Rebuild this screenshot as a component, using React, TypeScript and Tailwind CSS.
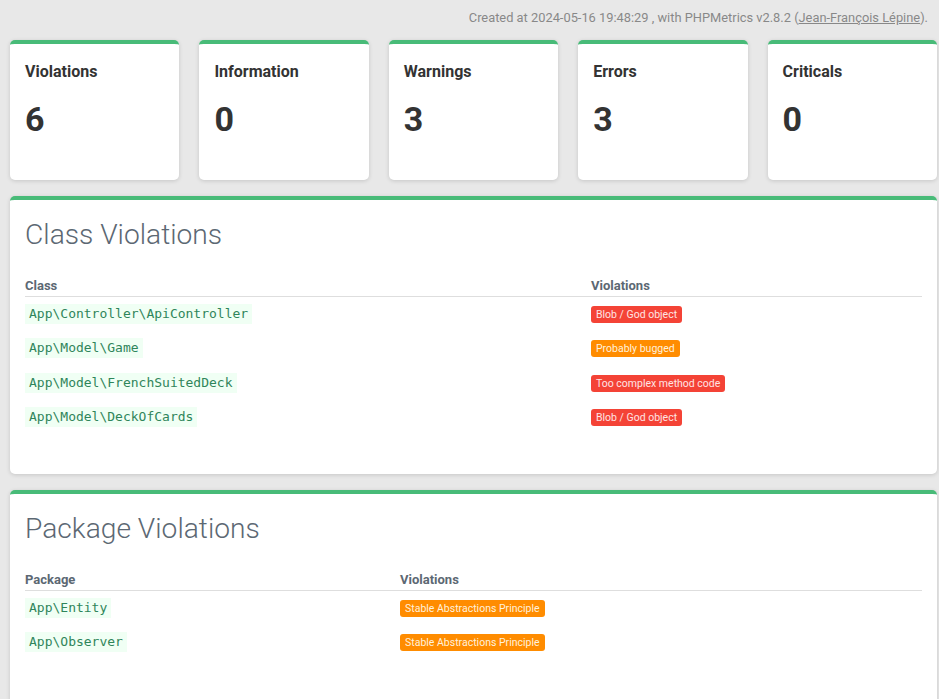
const stats = [
  { label: 'Violations', value: 6 },
  { label: 'Information', value: 0 },
  { label: 'Warnings', value: 3 },
  { label: 'Errors', value: 3 },
  { label: 'Criticals', value: 0 },
]

type Row = { name: string; badges: { text: string; level: 'error' | 'warning' }[] }

const classRows: Row[] = [
  { name: 'App\\Controller\\ApiController', badges: [{ text: 'Blob / God object', level: 'error' }] },
  { name: 'App\\Model\\Game', badges: [{ text: 'Probably bugged', level: 'warning' }] },
  { name: 'App\\Model\\FrenchSuitedDeck', badges: [{ text: 'Too complex method code', level: 'error' }] },
  { name: 'App\\Model\\DeckOfCards', badges: [{ text: 'Blob / God object', level: 'error' }] },
]

const packageRows: Row[] = [
  { name: 'App\\Entity', badges: [{ text: 'Stable Abstractions Principle', level: 'warning' }] },
  { name: 'App\\Observer', badges: [{ text: 'Stable Abstractions Principle', level: 'warning' }] },
]

function Badge({ text, level }: { text: string; level: 'error' | 'warning' }) {
  return (
    <span
      className={
        level === 'error'
          ? 'inline-block rounded-[3px] px-[5px] leading-[17px] text-[10.5px] bg-[#f44336] text-[#ffe4e4]'
          : 'inline-block rounded-[3px] px-[5px] leading-[17px] text-[10.5px] bg-[#ff8c00] text-[#fff1dc]'
      }
    >
      {text}
    </span>
  )
}

function ViolationTable({ title, firstCol, rows, colWidth, bottom }: { title: string; firstCol: string; rows: Row[]; colWidth: string; bottom: string }) {
  return (
    <div className={`bg-white rounded-[5px] border-t-4 border-[#48bb78] shadow-[0_1px_4px_rgba(0,0,0,0.15)] px-[15px] pt-[15px] ${bottom}`}>
      <h2 className="text-[28.2px] font-light text-[#5c6873] leading-[40px] mb-[21px]">{title}</h2>
      <table className="w-full border-collapse">
        <thead>
          <tr className="border-b border-[#dedede]">
            <th className={`text-left text-[13px] font-bold text-[#5c6873] pb-0 leading-[20px] ${colWidth}`}>{firstCol}</th>
            <th className="text-left text-[13px] font-bold text-[#5c6873] pb-0 leading-[20px]">Violations</th>
          </tr>
        </thead>
        <tbody>
          {rows.map(r => (
            <tr key={r.name} className="h-[34.5px]">
              <td className="align-middle pb-[2px]">
                <code className="inline-block bg-[#f0fff4] text-[#2f855a] px-[4px] leading-[20px] text-[13px] font-['DejaVu_Sans_Mono',monospace]">
                  {r.name}
                </code>
              </td>
              <td className="align-middle pb-[2px]">
                {r.badges.map(b => <Badge key={b.text} {...b} />)}
              </td>
            </tr>
          ))}
        </tbody>
      </table>
    </div>
  )
}

export default function App() {
  return (
    <div className="min-h-screen bg-[#e8e8e8] font-['Roboto',sans-serif] pl-[10px] pr-[2px] pb-4">
      <div className="text-right text-[12.85px] text-[#888] pt-[9px] pr-[9px] leading-[18px]">
        Created at 2024-05-16 19:48:29 , with PHPMetrics v2.8.2 (<span className="underline">Jean-François Lépine</span>).
      </div>
      <div className="grid grid-cols-5 gap-[20px] mt-[13px]">
        {stats.map(s => (
          <div key={s.label} className="bg-white rounded-[5px] border-t-4 border-[#48bb78] shadow-[0_1px_4px_rgba(0,0,0,0.15)] h-[140px] px-[15px] pt-[18px]">
            <div className="text-[16px] font-bold text-[#333] leading-[20px]">{s.label}</div>
            <div className="text-[34px] font-bold text-[#333] leading-[40px] mt-[17px]">{s.value}</div>
          </div>
        ))}
      </div>
      <div className="mt-[16px] flex flex-col gap-[16px]">
        <ViolationTable title="Class Violations" firstCol="Class" rows={classRows} colWidth="w-[566px]" bottom="pb-[39px]" />
        <ViolationTable title="Package Violations" firstCol="Package" rows={packageRows} colWidth="w-[375px]" bottom="pb-[60px]" />
      </div>
    </div>
  )
}
